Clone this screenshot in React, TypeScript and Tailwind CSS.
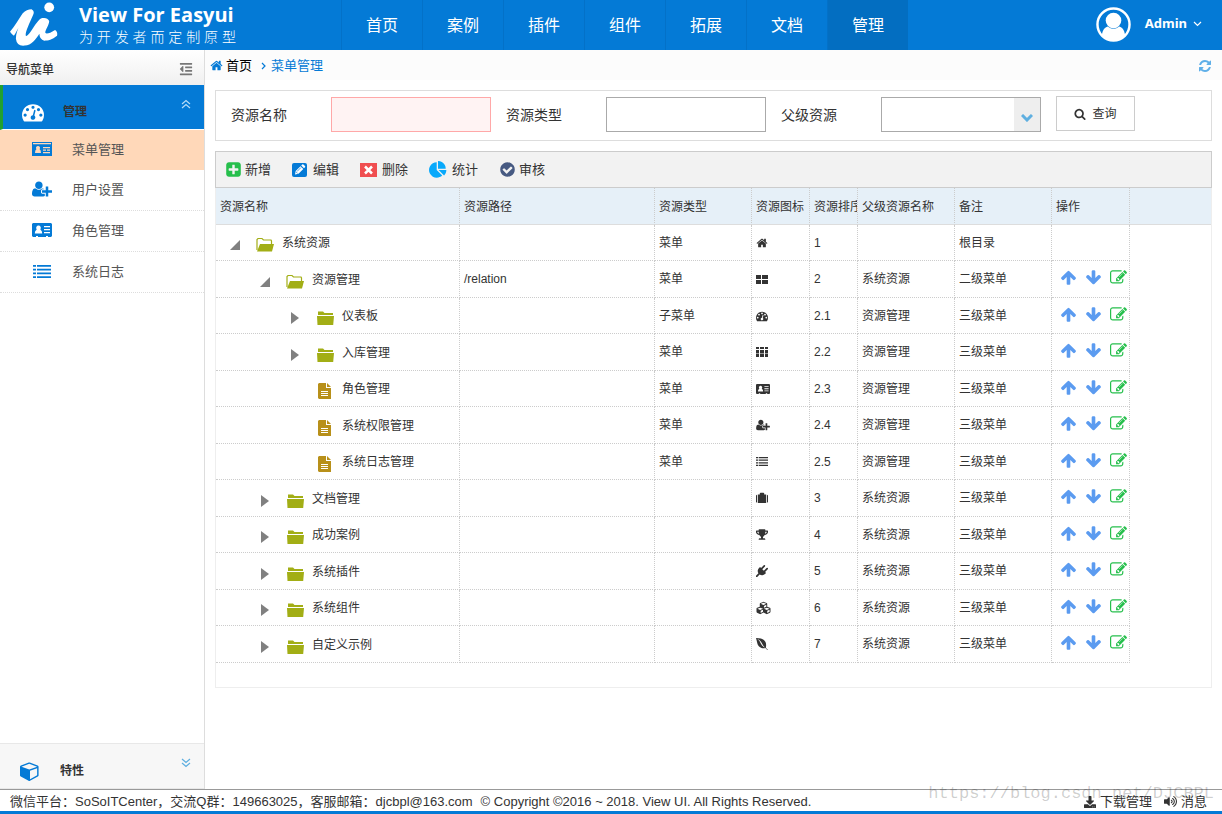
import { useState } from 'react';
import type { ReactNode } from 'react';
import { FaCubes, FaDownload, FaEnvira, FaOutdent, FaTrophy, FaVolumeUp } from 'react-icons/fa';

interface IconProps {
  className?: string;
}

interface Resource {
  id: string;
  level: 0 | 1 | 2;
  kind: 'open' | 'closed' | 'file';
  name: string;
  path?: string;
  type?: string;
  icon: ReactNode;
  order: string;
  parent?: string;
  remark: string;
}

const paths = {
  home: 'M1472 992v480q0 26-19 45t-45 19h-384v-384h-256v384h-384q-26 0-45-19t-19-45v-480q0-1 .5-3t.5-3l575-474 575 474q1 2 1 6zm223-69l-62 74q-8 9-21 11h-3q-13 0-21-7l-692-577-692 577q-12 8-24 7-13-2-21-11l-62-74q-8-10-7-23.5t11-21.5l719-599q32-26 76-26t76 26l244 204v-195q0-14 9-23t23-9h192q14 0 23 9t9 23v408l219 182q10 8 11 21.5t-7 23.5z',
  dashboard: 'M384 1152q0-53-37.5-90.5t-90.5-37.5-90.5 37.5-37.5 90.5 37.5 90.5 90.5 37.5 90.5-37.5 37.5-90.5zm192-448q0-53-37.5-90.5t-90.5-37.5-90.5 37.5-37.5 90.5 37.5 90.5 90.5 37.5 90.5-37.5 37.5-90.5zm428 481l101-382q6-26-7.5-48.5t-38.5-29.5-48 6.5-30 39.5l-101 382q-60 5-107 43.5t-63 98.5q-20 77 20 146t117 89 146-20 89-117q16-60-6-117t-72-91zm660-33q0-53-37.5-90.5t-90.5-37.5-90.5 37.5-37.5 90.5 37.5 90.5 90.5 37.5 90.5-37.5 37.5-90.5zm-640-640q0-53-37.5-90.5t-90.5-37.5-90.5 37.5-37.5 90.5 37.5 90.5 90.5 37.5 90.5-37.5 37.5-90.5zm448 192q0-53-37.5-90.5t-90.5-37.5-90.5 37.5-37.5 90.5 37.5 90.5 90.5 37.5 90.5-37.5 37.5-90.5zm320 448q0 261-141 483-19 29-54 29h-1402q-35 0-54-29-141-221-141-483 0-182 71-348t191-286 286-191 348-71 348 71 286 191 191 286 71 348z',
  up: 'M1675 971q0 51-37 90l-75 75q-38 38-91 38-54 0-90-38l-294-293v704q0 52-37.5 84.5t-90.5 32.5h-128q-53 0-90.5-32.5t-37.5-84.5v-704l-294 293q-36 38-90 38t-90-38l-75-75q-38-38-38-90 0-53 38-91l651-651q35-37 90-37 54 0 91 37l651 651q37 39 37 91z',
  down: 'M1675 832q0 53-37 90l-651 652q-39 37-91 37-53 0-90-37l-651-652q-38-36-38-90 0-53 38-91l74-75q39-37 91-37 53 0 90 37l294 294v-704q0-52 38-90t90-38h128q52 0 90 38t38 90v704l294-294q37-37 90-37 52 0 91 37l75 75q37 39 37 91z',
  edit: 'M888 1184l116-116-152-152-116 116v56h96v96h56zm440-720q-16-16-33 1l-350 350q-17 17-1 33t33-1l350-350q17-17 1-33zm80 594v190q0 119-84.5 203.5t-203.5 84.5h-832q-119 0-203.5-84.5t-84.5-203.5v-832q0-119 84.5-203.5t203.5-84.5h832q63 0 117 25 15 7 18 23 3 17-9 29l-49 49q-14 14-32 8-23-6-45-6h-832q-66 0-113 47t-47 113v832q0 66 47 113t113 47h832q66 0 113-47t47-113v-126q0-13 9-22l64-64q15-15 35-7t20 29zm-96-738l288 288-672 672h-288v-288zm444 132l-92 92-288-288 92-92q28-28 68-28t68 28l152 152q28 28 28 68t-28 68z',
  refresh: 'M1639 1056q0 5-1 7-64 268-268 434.5t-478 166.5q-146 0-282.5-55t-243.5-157l-129 129q-19 19-45 19t-45-19-19-45v-448q0-26 19-45t45-19h448q26 0 45 19t19 45-19 45l-137 137q71 66 161 102t187 36q134 0 250-65t186-179q11-17 53-117 8-23 30-23h192q13 0 22.5 9.5t9.5 22.5zm25-800v448q0 26-19 45t-45 19h-448q-26 0-45-19t-19-45 19-45l138-138q-148-137-349-137-134 0-250 65t-186 179q-11 17-53 117-8 23-30 23h-199q-13 0-22.5-9.5t-9.5-22.5v-7q65-268 270-434.5t480-166.5q146 0 284 55.5t245 156.5l130-129q19-19 45-19t45 19 19 45z',
  search: 'M1216 832q0-185-131.5-316.5t-316.5-131.5-316.5 131.5-131.5 316.5 131.5 316.5 316.5 131.5 316.5-131.5 131.5-316.5zm512 832q0 52-38 90t-90 38q-54 0-90-38l-343-342q-179 124-399 124-143 0-273.5-55.5t-225-150-150-225-55.5-273.5 55.5-273.5 150-225 225-150 273.5-55.5 273.5 55.5 225 150 150 225 55.5 273.5q0 220-124 399l343 343q37 37 37 90z',
  add: 'M1408 960v-128q0-26-19-45t-45-19h-320v-320q0-26-19-45t-45-19h-128q-26 0-45 19t-19 45v320h-320q-26 0-45 19t-19 45v128q0 26 19 45t45 19h320v320q0 26 19 45t45 19h128q26 0 45-19t19-45v-320h320q26 0 45-19t19-45zm256-544v960q0 119-84.5 203.5t-203.5 84.5h-960q-119 0-203.5-84.5t-84.5-203.5v-960q0-119 84.5-203.5t203.5-84.5h960q119 0 203.5 84.5t84.5 203.5z',
  check: 'M1412 734q0-28-18-46l-91-90q-19-19-45-19t-45 19l-408 407-226-226q-19-19-45-19t-45 19l-91 90q-18 18-18 46 0 27 18 45l362 362q19 19 45 19 27 0 46-19l543-543q18-18 18-45zm252 162q0 209-103 385.5t-279.5 279.5-385.5 103-385.5-103-279.5-279.5-103-385.5 103-385.5 279.5-279.5 385.5-103 385.5 103 279.5 279.5 103 385.5z',
  pie: 'M768 890l546 546q-106 108-247.5 168t-298.5 60q-209 0-385.5-103t-279.5-279.5-103-385.5 103-385.5 279.5-279.5 385.5-103v762zm187 6h773q0 157-60 298.5t-168 247.5zm709-128h-768v-768q209 0 385.5 103t279.5 279.5 103 385.5z',
  plug: 'M1755 453q37 38 37 90.5t-37 90.5l-401 400 150 150-160 160q-163 163-389.5 186.5t-411.5-100.5l-362 362h-181v-181l362-362q-124-185-100.5-411.5t186.5-389.5l160-160 150 150 400-401q38-37 91-37t90 37 37 90.5-37 90.5l-400 401 234 234 401-400q38-37 91-37t90 37z',
  cube: 'M896 1629l640-349v-636l-640 233v752zm-64-865l698-254-698-254-698 254zm832-252v768q0 35-18 65t-49 47l-704 384q-28 16-61 16t-61-16l-704-384q-31-17-49-47t-18-65v-768q0-40 23-73t61-47l704-256q22-8 44-8t44 8l704 256q38 14 61 47t23 73z',
  userPlus: 'M704 896q-159 0-271.5-112.5t-112.5-271.5 112.5-271.5 271.5-112.5 271.5 112.5 112.5 271.5-112.5 271.5-271.5 112.5zm960 128h352q13 0 22.5 9.5t9.5 22.5v192q0 13-9.5 22.5t-22.5 9.5h-352v352q0 13-9.5 22.5t-22.5 9.5h-192q-13 0-22.5-9.5t-9.5-22.5v-352h-352q-13 0-22.5-9.5t-9.5-22.5v-192q0-13 9.5-22.5t22.5-9.5h352v-352q0-13 9.5-22.5t22.5-9.5h192q13 0 22.5 9.5t9.5 22.5v352zm-736 224q0 52 38 90t90 38h256v238q-68 50-171 50h-874q-121 0-194-69t-73-190q0-53 3.5-103.5t14-109 26.5-108.5 43-97.5 62-81 85.5-53.5 111.5-20q19 0 39 17 79 61 154.5 91.5t164.5 30.5 164.5-30.5 154.5-91.5q20-17 39-17 132 0 217 96h-223q-52 0-90 38t-38 90v192z',
};

function Glyph({ name, className, box = 1792 }: { name: keyof typeof paths; className?: string; box?: number }) {
  return (
    <svg viewBox={`0 0 ${box} 1792`} fill="currentColor" className={className} aria-hidden="true">
      <path d={paths[name]} />
    </svg>
  );
}

function Logo({ className }: IconProps) {
  return (
    <svg viewBox="0 0 50 46" fill="#fff" className={className} aria-hidden="true">
      <path d="M0 31C5 25 9 18 13 12Q17 8 22 8Q26 10 23 15C20 22 16 30 16 34C16 37 19 34 21 31C26 24 29 18 33 17Q38 16 40 20C40 24 36 29 36 32Q38 34 46 29Q49 31 48 35C43 39 39 40 35 40Q30 39 30 33C26 39 22 45 15 45Q7 46 6 38C6 33 8 28 10 24C8 28 6 32 4 35Q2 34 0 31Z" />
      <circle cx="40" cy="6" r="5" />
    </svg>
  );
}

function Avatar({ className }: IconProps) {
  return (
    <svg viewBox="0 0 36 36" className={className} aria-hidden="true">
      <circle cx="18" cy="18" r="16.500" fill="none" stroke="#fff" strokeWidth="2.500" />
      <path fill="#fff" d="M6 29C7 23 9 21 12 20Q18 25 24 20C27 21 29 23 30 29Q25 35 18 35T6 29Z" />
      <circle cx="18" cy="14" r="8" fill="#fff" />
    </svg>
  );
}

function DoubleChevron({ down, className }: IconProps & { down?: boolean }) {
  return (
    <svg viewBox="0 0 10 10" fill="none" stroke="currentColor" strokeWidth="1.2" className={className} aria-hidden="true">
      <path d={down ? 'M1 1l4 3.5L9 1M1 5l4 3.5L9 5' : 'M1 5l4-3.5L9 5M1 9l4-3.5L9 9'} />
    </svg>
  );
}

function AddressCard({ className }: IconProps) {
  return (
    <svg viewBox="0 0 20 14" fill="currentColor" fillRule="evenodd" className={className} aria-hidden="true">
      <path d="M1 0h18l1 1v12l-1 1h-3v-1h-2v1H6v-1H4v1H1l-1-1V1zM6.500 2.500a2.300 2.300 0 0 0-2 3.500q.5 1-.5 1.200Q2.800 8 2.800 10.500h7.400Q10.200 8 9 7.200q-1-.2-.5-1.200a2.300 2.300 0 0 0-2-3.500zM12 3v1.300h6V3zM12 6v1.300h6V6zM12 9v1.300h6V9z" />
    </svg>
  );
}

function IdCard({ className }: IconProps) {
  return (
    <svg viewBox="0 0 20 14" fill="currentColor" fillRule="evenodd" className={className} aria-hidden="true">
      <path d="M0 0h20v14H0zM1 1v1.200h18V1zM6 4a2 2 0 0 0-1.600 3.200Q3 7.600 3 11h6Q9 7.600 7.600 7.200A2 2 0 0 0 6 4zM11 5v1.200h7V5zM11 7.500v1.200h3V7.500zM15 7.500v1.200h3V7.500zM11 10v1.200h7V10z" />
    </svg>
  );
}

function Grid4() {
  return (
    <svg viewBox="0 0 12 12" fill="currentColor" className="h-3 w-3" aria-hidden="true">
      <path d="M0 2h5v4H0zM6 2h6v4H6zM0 7h5v4H0zM6 7h6v4H6z" />
    </svg>
  );
}

function Grid9() {
  return (
    <svg viewBox="0 0 12 12" fill="currentColor" className="h-3 w-3" aria-hidden="true">
      <path d="M0 1h3v2H0zM4 1h4v2H4zM9 1h3v2H9zM0 4h3v3.500H0zM4 4h4v3.500H4zM9 4h3v3.500H9zM0 8h3v3H0zM4 8h4v3H4zM9 8h3v3H9z" />
    </svg>
  );
}

function Suitcase() {
  return (
    <svg viewBox="0 0 12 12" fill="currentColor" className="h-3 w-3" aria-hidden="true">
      <path d="M0 3.500L1.200 2.500V11L0 10zM2 2.500h1.800V1.200L4.500.7h3l.7.5v1.300H10V11H2zM10.800 2.500l1.200 1V10l-1.200 1z" />
    </svg>
  );
}

function ListIcon({ className }: IconProps) {
  return (
    <svg viewBox="0 0 18 14" fill="currentColor" preserveAspectRatio="none" className={className} aria-hidden="true">
      <path d="M0 0h3v2H0zM4 0h14v2H4zM0 4h3v2H0zM4 4h14v2H4zM0 8h3v2H0zM4 8h14v2H4zM0 12h3v2H0zM4 12h14v2H4z" />
    </svg>
  );
}

function NodeIcon({ kind }: { kind: Resource['kind'] }) {
  if (kind === 'file') {
    return (
      <svg viewBox="0 0 18 16" className="h-4 w-[18px]" aria-hidden="true">
        <path fill="#b8901a" d="M3 0h7v5h5v11H3L2 15V1zM11 0l4 4h-4z" />
        <path stroke="#fff" d="M5 8.500h7M5 10.500h7M5 12.500h7" />
      </svg>
    );
  }
  if (kind === 'open') {
    return (
      <svg viewBox="0 0 18 16" className="h-4 w-[18px]" aria-hidden="true">
        <path fill="none" stroke="#a2ae15" strokeWidth="1.2" d="M1 13V2.500l1-1h4l1.500 1.500H15l.5 1V7" />
        <path fill="#a2ae15" d="M4 7h14l-2 7.500H1z" />
      </svg>
    );
  }
  return (
    <svg viewBox="0 0 18 16" fill="#a2ae15" className="h-4 w-[18px]" aria-hidden="true">
      <path d="M2 5V1.500h5L8.500 3H17v2zM1 6h17l-.8 9H1.500z" />
    </svg>
  );
}

function TreeArrow({ kind }: { kind: Resource['kind'] }) {
  return (
    <svg viewBox="0 0 11 12" fill="#808080" className="h-3 w-[11px]" aria-hidden="true">
      {kind === 'open' && <path d="M10 1v10H0z" />}
      {kind === 'closed' && <path d="M1 0l8 6-8 6z" />}
    </svg>
  );
}

const navItems = ['首页', '案例', '插件', '组件', '拓展', '文档', '管理'];

const menuItems = [
  { label: '菜单管理', icon: <IdCard className="h-[14px] w-5" /> },
  { label: '用户设置', icon: <Glyph name="userPlus" box={2048} className="h-[18px] w-5" /> },
  { label: '角色管理', icon: <AddressCard className="h-[14px] w-5" /> },
  { label: '系统日志', icon: <ListIcon className="h-[13px] w-[18px]" /> },
];

const resources: Resource[] = [
  { id: '1', level: 0, kind: 'open', name: '系统资源', type: '菜单', icon: <Glyph name="home" className="h-3 w-3" />, order: '1', remark: '根目录' },
  { id: '2', level: 1, kind: 'open', name: '资源管理', path: '/relation', type: '菜单', icon: <Grid4 />, order: '2', parent: '系统资源', remark: '二级菜单' },
  { id: '21', level: 2, kind: 'closed', name: '仪表板', type: '子菜单', icon: <Glyph name="dashboard" className="h-3 w-3" />, order: '2.1', parent: '资源管理', remark: '三级菜单' },
  { id: '22', level: 2, kind: 'closed', name: '入库管理', type: '菜单', icon: <Grid9 />, order: '2.2', parent: '资源管理', remark: '三级菜单' },
  { id: '23', level: 2, kind: 'file', name: '角色管理', type: '菜单', icon: <AddressCard className="h-[10px] w-[14px]" />, order: '2.3', parent: '资源管理', remark: '三级菜单' },
  { id: '24', level: 2, kind: 'file', name: '系统权限管理', type: '菜单', icon: <Glyph name="userPlus" box={2048} className="h-3 w-[14px]" />, order: '2.4', parent: '资源管理', remark: '三级菜单' },
  { id: '25', level: 2, kind: 'file', name: '系统日志管理', type: '菜单', icon: <ListIcon className="h-[9px] w-3" />, order: '2.5', parent: '资源管理', remark: '三级菜单' },
  { id: '3', level: 1, kind: 'closed', name: '文档管理', icon: <Suitcase />, order: '3', parent: '系统资源', remark: '三级菜单' },
  { id: '4', level: 1, kind: 'closed', name: '成功案例', icon: <FaTrophy className="h-[11px] w-3" />, order: '4', parent: '系统资源', remark: '三级菜单' },
  { id: '5', level: 1, kind: 'closed', name: '系统插件', icon: <Glyph name="plug" className="h-3 w-3" />, order: '5', parent: '系统资源', remark: '三级菜单' },
  { id: '6', level: 1, kind: 'closed', name: '系统组件', icon: <FaCubes className="h-[14px] w-[15px]" />, order: '6', parent: '系统资源', remark: '三级菜单' },
  { id: '7', level: 1, kind: 'closed', name: '自定义示例', icon: <FaEnvira className="h-[14px] w-3" />, order: '7', parent: '系统资源', remark: '三级菜单' },
];

const columns = [
  { title: '资源名称', width: 'w-[244px]' },
  { title: '资源路径', width: 'w-[195px]' },
  { title: '资源类型', width: 'w-[97px]' },
  { title: '资源图标', width: 'w-[58px]' },
  { title: '资源排序', width: 'w-[48px]' },
  { title: '父级资源名称', width: 'w-[97px]' },
  { title: '备注', width: 'w-[97px]' },
  { title: '操作', width: 'w-[78px]' },
];

const indent = ['pl-[14px]', 'pl-[44px]', 'pl-[74px]'];
const cell = 'border-r border-b border-dotted border-[#ccc] px-1';

function Header() {
  return (
    <header className="flex h-[50px] shrink-0 bg-[#047ad6] text-white">
      <div className="flex w-[341px] shrink-0 gap-5 pl-[10px]">
        <Logo className="mt-px h-[46px] w-[49px]" />
        <div className="w-[157px] pt-[2px] font-['Open_Sans','Noto_Sans_CJK_SC',sans-serif]">
          <div className="text-[20px] leading-[26px] font-bold whitespace-nowrap">View For Easyui</div>
          <div className="text-sm leading-[18px] font-light [text-align-last:justify]">为开发者而定制原型</div>
        </div>
      </div>
      <nav className="flex">
        {navItems.map(item => (
          <a key={item} href="#" className={`flex w-[81px] items-center justify-center border-l border-[#0371c8] pt-[2px] text-base ${
            item === '管理' ? 'bg-[#036ec1]' : ''
          }`}>
            {item}
          </a>
        ))}
      </nav>
      <button type="button" className="ml-auto flex items-center gap-[14px] pr-5 pb-[2px]">
        <Avatar className="h-[35px] w-[35px]" />
        <span className="flex items-center gap-[6px] font-['Noto_Sans',sans-serif] text-[13px] font-bold">
          Admin
          <svg viewBox="0 0 9 6" fill="none" stroke="currentColor" strokeWidth="1.2" className="h-[6px] w-[9px]" aria-hidden="true">
            <path d="M1 1l3.500 3.500L8 1" />
          </svg>
        </span>
      </button>
    </header>
  );
}

function Sidebar() {
  return (
    <aside className="flex w-[205px] shrink-0 flex-col border-r border-[#ddd]">
      <div className="flex h-[35px] items-center justify-between bg-linear-to-b from-white to-[#f0f0f0] pr-[11px] pl-[6px] pt-1 text-xs font-medium">
        导航菜单
        <button type="button" aria-label="收起菜单" className="pb-px"><FaOutdent className="h-[14px] w-[14px] text-[#777]" /></button>
      </div>
      <button type="button" className="flex h-[45px] items-center border-b border-l-[3px] border-b-white border-l-[#22a030] bg-[#047ad6] pr-[13px] pl-[19px] text-xs font-bold">
        <Glyph name="dashboard" className="mt-[10px] h-[22px] w-[22px] text-white" />
        <span className="mt-[10px] ml-[19px]">管理</span>
        <DoubleChevron className="mb-[6px] ml-auto h-[10px] w-[10px] text-[#b7dcf7]" />
      </button>
      <ul>
        {menuItems.map((item, i) => (
          <li key={item.label} className={i === 0 ? 'bg-[#ffd8b9]' : 'border-b border-dotted border-[#ddd]'}>
            <a href="#" className="flex h-10 items-center pl-8 text-[13px] text-[#555]">
              <span className="flex w-5 justify-center pb-[2px] text-[#047ad6]">{item.icon}</span>
              <span className="ml-5">{item.label}</span>
            </a>
          </li>
        ))}
      </ul>
      <button type="button" className="mt-auto flex h-[46px] items-center border-y border-[#e8e8e8] bg-[#f7f7f7] pr-[13px] pl-5 text-xs font-bold">
        <Glyph name="cube" className="mt-[10px] h-5 w-5 text-[#047ad6]" />
        <span className="mt-[10px] ml-5">特性</span>
        <DoubleChevron down className="mb-[6px] ml-auto h-[10px] w-[10px] text-[#5fafe0]" />
      </button>
    </aside>
  );
}

function SearchForm() {
  const [name, setName] = useState('');
  const [type, setType] = useState('');

  return (
    <form onSubmit={e => e.preventDefault()} className="flex h-[51px] items-center gap-[15px] border border-[#ddd] pb-[2px] pl-[15px] text-sm">
      <div className="flex items-center">
        <label htmlFor="name" className="w-[100px]">资源名称</label>
        <input id="name" type="text" value={name} onChange={e => setName(e.target.value)}
          className="h-[35px] w-40 border border-[#ffa8a8] bg-[#fff3f3] px-2 outline-none" />
      </div>
      <div className="flex items-center">
        <label htmlFor="type" className="w-[100px]">资源类型</label>
        <input id="type" type="text" value={type} onChange={e => setType(e.target.value)}
          className="h-[35px] w-40 border border-[#aaa] px-2 outline-none" />
      </div>
      <div className="flex items-center">
        <label htmlFor="parent" className="w-[100px]">父级资源</label>
        <div className="relative">
          <select id="parent" className="block h-[35px] w-40 appearance-none border border-[#aaa] bg-white px-2 outline-none">
            <option value=""></option>
            <option>系统资源</option>
            <option>资源管理</option>
          </select>
          <span className="pointer-events-none absolute inset-y-px right-px flex w-[26px] items-center justify-center bg-[#eee] pt-[6px]">
            <svg viewBox="0 0 12 8" fill="none" stroke="#5fafe0" strokeWidth="3" className="h-2 w-3" aria-hidden="true">
              <path d="M1 1l5 5 5-5" />
            </svg>
          </span>
        </div>
      </div>
      <button type="submit" className="mb-[2px] flex h-[35px] w-[79px] items-center justify-center gap-[6px] border border-[#ccc] text-xs">
        <Glyph name="search" className="h-3 w-3" />
        查询
      </button>
    </form>
  );
}

function Toolbar() {
  return (
    <div className="flex h-[37px] items-center gap-[21px] border border-[#ccc] bg-[#f2f2f2] pl-[9px] text-[13px]">
      <button type="button" className="flex items-center gap-[3px]">
        <Glyph name="add" className="h-[17px] w-[17px] text-[#26bf4c]" />新增
      </button>
      <button type="button" className="flex items-center gap-[5px]">
        <svg viewBox="0 0 16 16" className="h-4 w-4" aria-hidden="true">
          <rect y="1" width="15" height="14" rx="2" fill="#047ad6" />
          <path fill="#fff" d="M3 12.500l.7-3.500L8.500 4.200l2.800 2.800-4.800 4.800zM9.200 3.500l1-1q.6-.5 1.200 0l1.600 1.600q.5.6 0 1.200l-1 1z" />
          <path fill="none" stroke="#047ad6" strokeWidth=".7" d="M5 9.500L9 5.500M4.200 10l1.500 1.500" />
        </svg>
        编辑
      </button>
      <button type="button" className="flex items-center gap-[5px]">
        <svg viewBox="0 0 17 14" className="h-[14px] w-[17px]" aria-hidden="true">
          <path fill="#f04e50" d="M0 0h17v14H0z" />
          <path stroke="#fff" strokeWidth="2.500" d="M5 3.500l7 7M12 3.500l-7 7" />
        </svg>
        删除
      </button>
      <button type="button" className="flex items-center gap-[5px]">
        <Glyph name="pie" className="h-[18px] w-[18px] text-[#08a9fb]" />统计
      </button>
      <button type="button" className="flex items-center gap-[3px]">
        <Glyph name="check" className="h-[17px] w-[17px] text-[#475a82]" />审核
      </button>
    </div>
  );
}

function ResourceTable() {
  return (
    <div className="border-x border-b border-[#eee] pb-6">
      <table className="w-full table-fixed border-separate border-spacing-0 text-left text-xs">
        <thead>
          <tr className="h-[37px] bg-[#e6f0f8]">
            {columns.map(col => (
              <th key={col.title} className={`${col.width} overflow-hidden border-r border-b border-r-[#ccc] border-b-[#ddd] px-1 pt-[2px] font-normal whitespace-nowrap [border-right-style:dotted]`}>
                {col.title}
              </th>
            ))}
            <td className="border-b border-[#ddd]" />
          </tr>
        </thead>
        <tbody>
          {resources.map(row => (
            <tr key={row.id} className="odd:h-9 even:h-[37px]">
              <td className={`border-r border-b border-dotted border-[#ccc] pt-px ${indent[row.level]}`}>
                <div className="flex items-center">
                  <span className="mt-1 mr-[15px]"><TreeArrow kind={row.kind} /></span>
                  <span className="mt-1 mr-2"><NodeIcon kind={row.kind} /></span>
                  {row.name}
                </div>
              </td>
              <td className={cell}>{row.path}</td>
              <td className={cell}>{row.type}</td>
              <td className={cell}>{row.icon}</td>
              <td className={cell}>{row.order}</td>
              <td className={cell}>{row.parent}</td>
              <td className={cell}>{row.remark}</td>
              <td className={cell}>
                {row.parent && (
                  <div className="flex gap-2 pb-[3px] pl-1 text-[#5b9bf0]">
                    <button type="button" aria-label="上移"><Glyph name="up" className="h-[17px] w-[17px]" /></button>
                    <button type="button" aria-label="下移"><Glyph name="down" className="h-[17px] w-[17px]" /></button>
                    <button type="button" aria-label="编辑"><Glyph name="edit" className="h-[17px] w-[17px] text-[#26bf4c]" /></button>
                  </div>
                )}
              </td>
              <td />
            </tr>
          ))}
        </tbody>
      </table>
    </div>
  );
}

function Footer() {
  return (
    <footer className="relative flex h-[25px] shrink-0 items-center border-t border-b-[3px] border-t-[#999] border-b-[#047ad6] pt-[2px] pr-[15px] pl-[10px] text-[13px] whitespace-nowrap">
      <span>微信平台：SoSoITCenter，交流Q群：149663025，客服邮箱：</span>
      <span>djcbpl@163.com</span>
      <span className="ml-2">© Copyright ©2016 ~ 2018. View UI. All Rights Reserved.</span>
      <a href="#" className="ml-auto flex items-center gap-1"><FaDownload className="h-3 w-3" />下载管理</a>
      <a href="#" className="ml-3 flex items-center gap-1"><FaVolumeUp className="h-[13px] w-[13px]" />消息</a>
      <span className="pointer-events-none absolute right-2 bottom-[7px] font-['Liberation_Mono',monospace] text-[17px] leading-5 text-black/20">
        https://blog.csdn.net/DJCBPL
      </span>
    </footer>
  );
}

export default function App() {
  return (
    <div className="flex min-h-screen flex-col bg-white font-['Liberation_Sans','Noto_Sans_CJK_SC',sans-serif] text-[#333]">
      <Header />
      <div className="flex flex-1">
        <Sidebar />
        <main className="min-w-0 flex-1">
          <div className="flex h-[30px] items-center bg-[#fcfcfc] pt-px pr-[10px] pl-[5px] text-[13px]">
            <Glyph name="home" className="h-[13px] w-[13px] text-[#047ad6]" />
            <a href="#" className="ml-[3px] text-black">首页</a>
            <svg viewBox="0 0 6 8" fill="none" stroke="#047ad6" strokeWidth="1.2" className="ml-[9px] h-2 w-[6px]" aria-hidden="true">
              <path d="M1 1l3 3-3 3" />
            </svg>
            <a href="#" className="ml-1 text-[#047ad6]">菜单管理</a>
            <button type="button" aria-label="刷新" className="ml-auto">
              <Glyph name="refresh" className="h-[14px] w-[14px] text-[#5fafe8]" />
            </button>
          </div>
          <div className="flex flex-col gap-[10px] p-[10px]">
            <SearchForm />
            <div>
              <Toolbar />
              <ResourceTable />
            </div>
          </div>
        </main>
      </div>
      <Footer />
    </div>
  );
}
